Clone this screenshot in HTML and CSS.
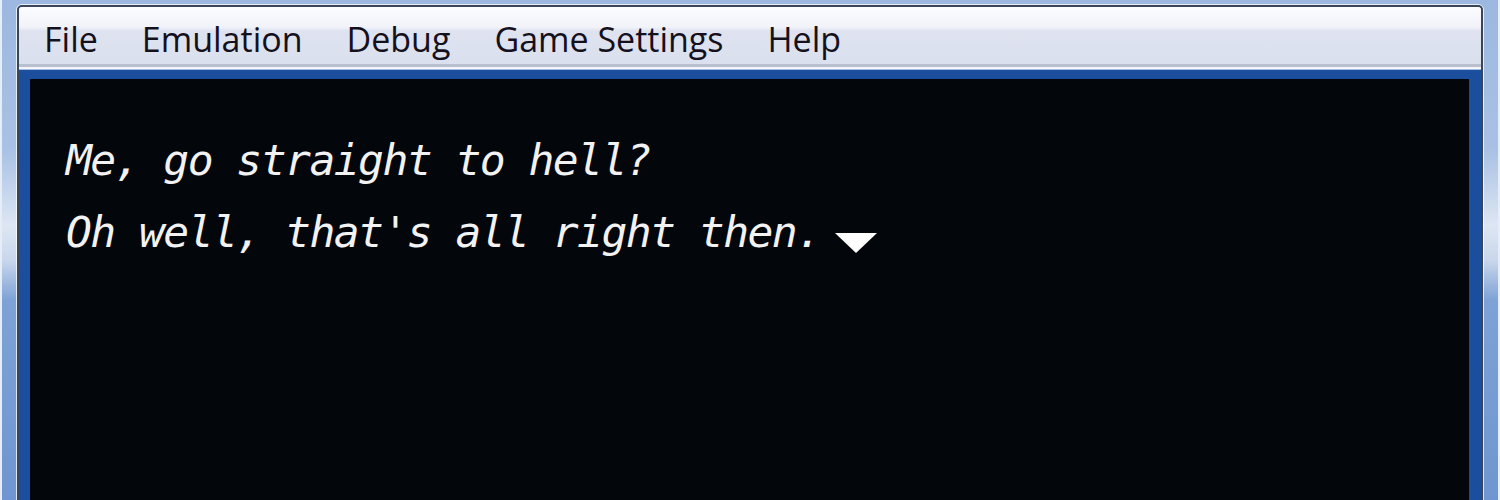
FILE: index.html
```html
<!DOCTYPE html>
<html>
<head>
<meta charset="utf-8">
<link rel="stylesheet" href="styles.css">
</head>
<body>
<div class="frame">
  <div class="client">
    <nav class="menubar">
      <span class="menu-item">File</span>
      <span class="menu-item">Emulation</span>
      <span class="menu-item">Debug</span>
      <span class="menu-item">Game Settings</span>
      <span class="menu-item">Help</span>
    </nav>
    <div class="viewport">
      <div class="screen">
        <p class="line">Me, go straight to hell?</p>
        <p class="line">Oh well, that's all right then.<span class="cursor"></span></p>
      </div>
    </div>
  </div>
</div>
</body>
</html>
```
FILE: styles.css
```css
html, body {
  margin: 0;
  padding: 0;
  width: 1500px;
  height: 500px;
  overflow: hidden;
}
.frame {
  box-sizing: border-box;
  width: 1500px;
  height: 500px;
  padding: 5px 17px 0 17px;
  background:
    linear-gradient(90deg, #e6edf7 0, #e6edf7 2px, transparent 2px, transparent 1498px, #e6edf7 1498px),
    linear-gradient(180deg, #9cb8e0 0, #a9c1e4 30%, #dde6f3 45%, #c9d7ec 52%, #7ea2d6 60%, #6f96d0 100%);
  display: flex;
}
.client {
  flex: 1;
  display: flex;
  flex-direction: column;
  border: 2px solid #3a4557;
  border-bottom: 0;
  border-radius: 5px 5px 0 0;
  box-shadow: 0 0 0 1px rgba(255,255,255,0.75);
  overflow: hidden;
}
.menubar {
  height: 57px;
  flex: none;
  display: flex;
  align-items: center;
  padding-left: 3px;
  background: linear-gradient(180deg, #fbfcfe 0, #f1f3f9 35%, #dfe3f0 42%, #dbe0ee 100%);
  border-bottom: 3px solid #b8bfcf;
  box-shadow: 0 2px 0 #f3f5fa;
  font-family: "Open Sans", "Noto Sans", sans-serif;
  font-size: 34px;
  color: #14101c;
}
.menu-item {
  padding: 0 22px;
  line-height: 57px;
  position: relative;
  top: 4px;
}
.viewport {
  flex: 1;
  margin-top: 3px;
  background: #1b4f9d;
  padding: 9px 12px 0 11px;
  display: flex;
}
.screen {
  flex: 1;
  background: #03060b;
  padding: 45px 0 0 36px;
}
.line {
  margin: 0;
  font-family: "DejaVu Sans Mono", monospace;
  font-style: italic;
  font-size: 43px;
  letter-spacing: -1.55px;
  line-height: 72px;
  color: #f2f2f2;
  white-space: pre;
}
.cursor {
  display: inline-block;
  width: 0;
  height: 0;
  margin-left: 15px;
  border-left: 21px solid transparent;
  border-right: 21px solid transparent;
  border-top: 20px solid #ffffff;
  vertical-align: -6px;
}
```
